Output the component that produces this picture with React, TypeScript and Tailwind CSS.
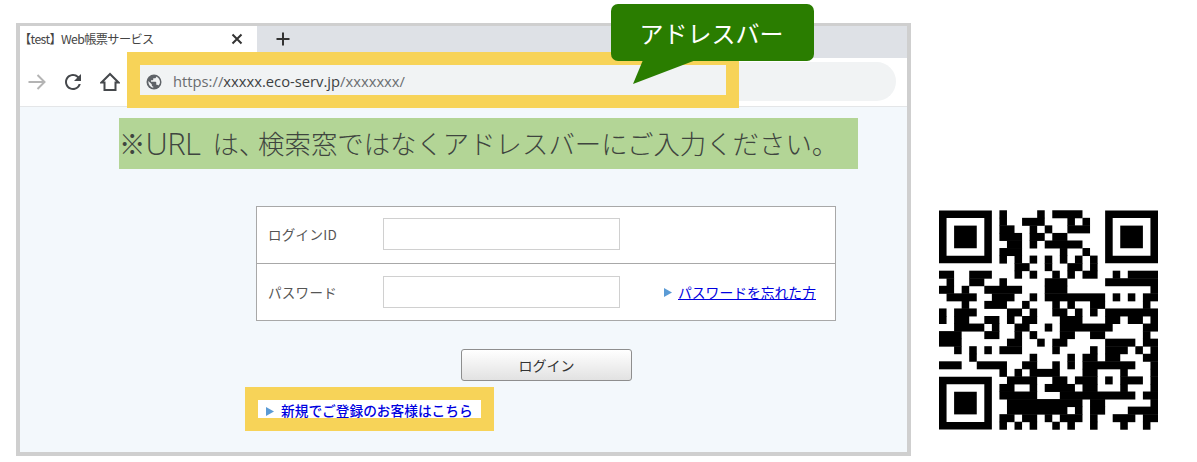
const cjk = { fontFamily: '"Noto Sans CJK JP", "Noto Sans", sans-serif' };

const QR_ROWS = [
  "8 13 15-18",
  "8 11-13 17 19",
  "8-9 12 14 17-19",
  "8-10 12-13 15-16",
  "9-10 12 14-18",
  "8-10 16 19",
  "8 10 12 14 16 18 20",
  "10-11 14 17-18 20",
  "0-1 4-6 10 12 15 17 19-20 23 25-28",
  "1 4-5 8 14-16 22-28",
  "0-1 3 6-10 14-16 28",
  "1-4 7-9 12 14-21 23 25 27-28",
  "3 6-8 11 15 17 20-21 27",
  "0 2-4 9-10 12 15-16 18 20 22-28",
  "0 2-3 6-7 9 11-12 16-18 22-23 25-26 28",
  "2-5 7 10-11 14 16-22 27-28",
  "0-2 6-7 10 12 16-17 20-21 27",
  "0-2 9-10 13 15-16 22-25 27-28",
  "2 4 6 8-10 15 20 22-24 26 28",
  "4 12 17 19-20 22-23 27-28",
  "0-2 5-8 11-12 15 17 19-25 28",
  "8 10 12-15 19-20 24 28",
  "9-12 15-16 18-20 22 24-26 28",
  "8-9 12 14-17 19-20 24 28",
  "8-12 16-25 27-28",
  "9-18 20-21 28",
  "9-16 18 20-21 25-28",
  "8-9 11-12 14 16-18 20 23-25 27-28",
  "8 10 12 15 17 20 24 27",
];

function Finder({ x, y }: { x: number; y: number }) {
  return (
    <g>
      <path fillRule="evenodd" d={`M${x} ${y}h7v7h-7zM${x + 1} ${y + 1}v5h5v-5z`} />
      <rect x={x + 2} y={y + 2} width={3} height={3} />
    </g>
  );
}

function Qr() {
  return (
    <svg viewBox="0 0 29 29" className="w-[219px] h-[220px] block">
      <Finder x={0} y={0} />
      <Finder x={22} y={0} />
      <Finder x={0} y={22} />
      {QR_ROWS.map((row, r) =>
        row.split(" ").map((part) => {
          const [a, b] = part.split("-").map(Number);
          return <rect key={`${r}-${part}`} x={a} y={r - 0.03} width={(b ?? a) - a + 1} height={1.06} />;
        })
      )}
    </svg>
  );
}

function Tri() {
  return (
    <svg width="8" height="9" viewBox="0 0 8 9" className="shrink-0">
      <path d="M0 0L8 4.5L0 9z" fill="#5b9bd5" />
    </svg>
  );
}

export default function App() {
  return (
    <div className="relative w-[1197px] h-[462px] bg-white flex items-start pl-[16px] pt-[23px] overflow-hidden" style={cjk}>
      {/* browser window */}
      <div className="w-[895px] h-[433px] shrink-0 flex flex-col border-x-[4px] border-t-[3px] border-b-[4px] border-[#cfcfcf] bg-[#f3f8fc]">
        <div className="h-[32px] shrink-0 flex items-start bg-[#dee1e6]">
          <div className="w-[237px] h-[32px] bg-white flex items-center justify-between pr-[12px] pb-[6px]">
            <span className="text-[12.2px] tracking-[-0.6px] text-[#444] -ml-[1px]">【test】Web帳票サービス</span>
            <svg width="12" height="12" viewBox="0 0 12 12" className="mr-[2px]"><path d="M1.5 1.5L10.5 10.5M10.5 1.5L1.5 10.5" stroke="#333" strokeWidth="2" /></svg>
          </div>
          <svg width="14" height="14" viewBox="0 0 14 14" className="ml-[19px] mt-[6px]"><path d="M7 0.5V13.5M0.5 7H13.5" stroke="#333" strokeWidth="2" /></svg>
        </div>
        <div className="h-[49px] shrink-0 bg-white border-b border-[#e4e6e8] flex items-center pl-[7px] pr-[11px]">
          <svg width="20" height="20" viewBox="0 0 20 20" className="shrink-0"><path d="M1.5 10H17.5M10.5 3L17.5 10L10.5 17" fill="none" stroke="#b4b4b4" strokeWidth="2" /></svg>
          <svg width="24" height="24" viewBox="0 0 24 24" className="ml-[14px] shrink-0" fill="#45484c"><path d="M17.65 6.35A7.958 7.958 0 0 0 12 4c-4.42 0-7.99 3.58-7.99 8s3.57 8 7.99 8c3.73 0 6.84-2.55 7.73-6h-2.08A5.99 5.99 0 0 1 12 18c-3.31 0-6-2.69-6-6s2.69-6 6-6c1.66 0 3.14.69 4.22 1.78L13 11h7V4l-2.35 2.35z" /></svg>
          <svg width="20" height="20" viewBox="0 0 20 20" className="ml-[15px] shrink-0"><path d="M10 2L1.5 10.5H4.5V18H15.5V10.5H18.5Z" fill="none" stroke="#45484c" strokeWidth="2" /></svg>
          <div className="relative ml-[10px] flex-1 h-[39px] mb-[1px] rounded-full bg-[#f1f3f4] flex items-center pl-[15px]">
            <svg width="18" height="18" viewBox="0 0 24 24" fill="#5f6368" className="shrink-0"><circle cx="12" cy="12" r="10" /><path d="M4.5 10.5L9 15v1c0 1.1.9 2 2 2v1.5C7 19 4.2 15 4.5 10.5zM17.8 16.8c-.3-.8-1-1.3-1.8-1.3h-1v-3c0-.5-.5-1-1-1H8v-2h2c.5 0 1-.5 1-1V7h2c1.100 0 2-.9 2-2v-.3c2.900 1.200 5 4 5 7.300 0 2-.8 3.500-2.200 4.800z" fill="#f1f3f4" /></svg>
            <span className="ml-[10px] text-[14.75px] text-[#6a6d70] whitespace-nowrap" style={{ fontFamily: '"Open Sans", sans-serif' }}>
              https://<span className="text-[#3c3f42]">xxxxx.eco-serv.jp</span>/xxxxxxx/
            </span>
            {/* yellow highlight frame */}
            <div className="absolute left-[-3px] top-[-10px] w-[612px] h-[56px] border-[13px] border-[#f7d358]" />
          </div>
        </div>
        <div className="flex-1 flex flex-col items-start">
          <div className="mt-[11px] ml-[99px] w-[739px] h-[51px] bg-[#b3d596] flex items-center text-[26.4px] text-[#3f453f] whitespace-nowrap font-light leading-none">
            ※<span className="text-[31px] tracking-[-0.5px]" style={{ fontFamily: '"Open Sans", sans-serif' }}>URL</span>
            <span className="ml-[12px]">は</span><span className="[font-feature-settings:'palt']">、</span><span className="ml-[6px]">検索窓ではなくアドレスバーにご入力ください。</span>
          </div>
          <div className="mt-[37px] ml-[236px] w-[580px] h-[115px] bg-white border border-[#a8a8a8] flex flex-col text-[13.5px] tracking-[0.3px] text-[#555]">
            <div className="h-[57px] flex items-center border-b border-[#a8a8a8] pl-[11px] pb-[2px]">
              <span className="w-[115px]">ログインID</span>
              <div className="w-[237px] h-[32px] border border-[#d0d0d0] bg-white" />
            </div>
            <div className="flex-1 flex items-center pl-[11px]">
              <span className="w-[115px]">パスワード</span>
              <div className="w-[237px] h-[32px] border border-[#d0d0d0] bg-white" />
              <div className="ml-[44px] flex items-center gap-[1px]">
                <Tri />
                <a className="text-[#0000e0] underline whitespace-nowrap text-[13.8px] tracking-normal pl-[5px]">パスワードを忘れた方</a>
              </div>
            </div>
          </div>
          <button className="mt-[28px] ml-[441px] w-[171px] h-[32px] rounded-[3px] border border-[#8e8e8e] bg-gradient-to-b from-white to-[#e2e2e2] text-[14px] text-[#333]">ログイン</button>
          <div className="mt-[6px] ml-[225px] w-[249px] h-[44px] border-[13px] border-[#f7d358] bg-white flex items-start pl-[8px] overflow-hidden">
            <div className="flex items-center gap-[7px] h-[18px] pt-[4px] leading-none">
              <Tri />
              <a className="text-[13.7px] text-[#0000e0] whitespace-nowrap font-medium">新規でご登録のお客様はこちら</a>
            </div>
          </div>
        </div>
      </div>
      {/* QR */}
      <div className="ml-[28px] mt-[187px] shrink-0"><Qr /></div>
      {/* callout */}
      <div className="absolute left-[611px] top-[4px] w-[203px] h-[57px] rounded-[7px] bg-[#2a7d00] flex items-center justify-center text-[24px] text-white pr-[2px]">
        アドレスバー
        <svg width="64" height="25" viewBox="0 0 64 25" className="absolute left-[22px] top-[56px]"><path d="M10 0L0 24L63 0Z" fill="#2a7d00" /></svg>
      </div>
    </div>
  );
}
